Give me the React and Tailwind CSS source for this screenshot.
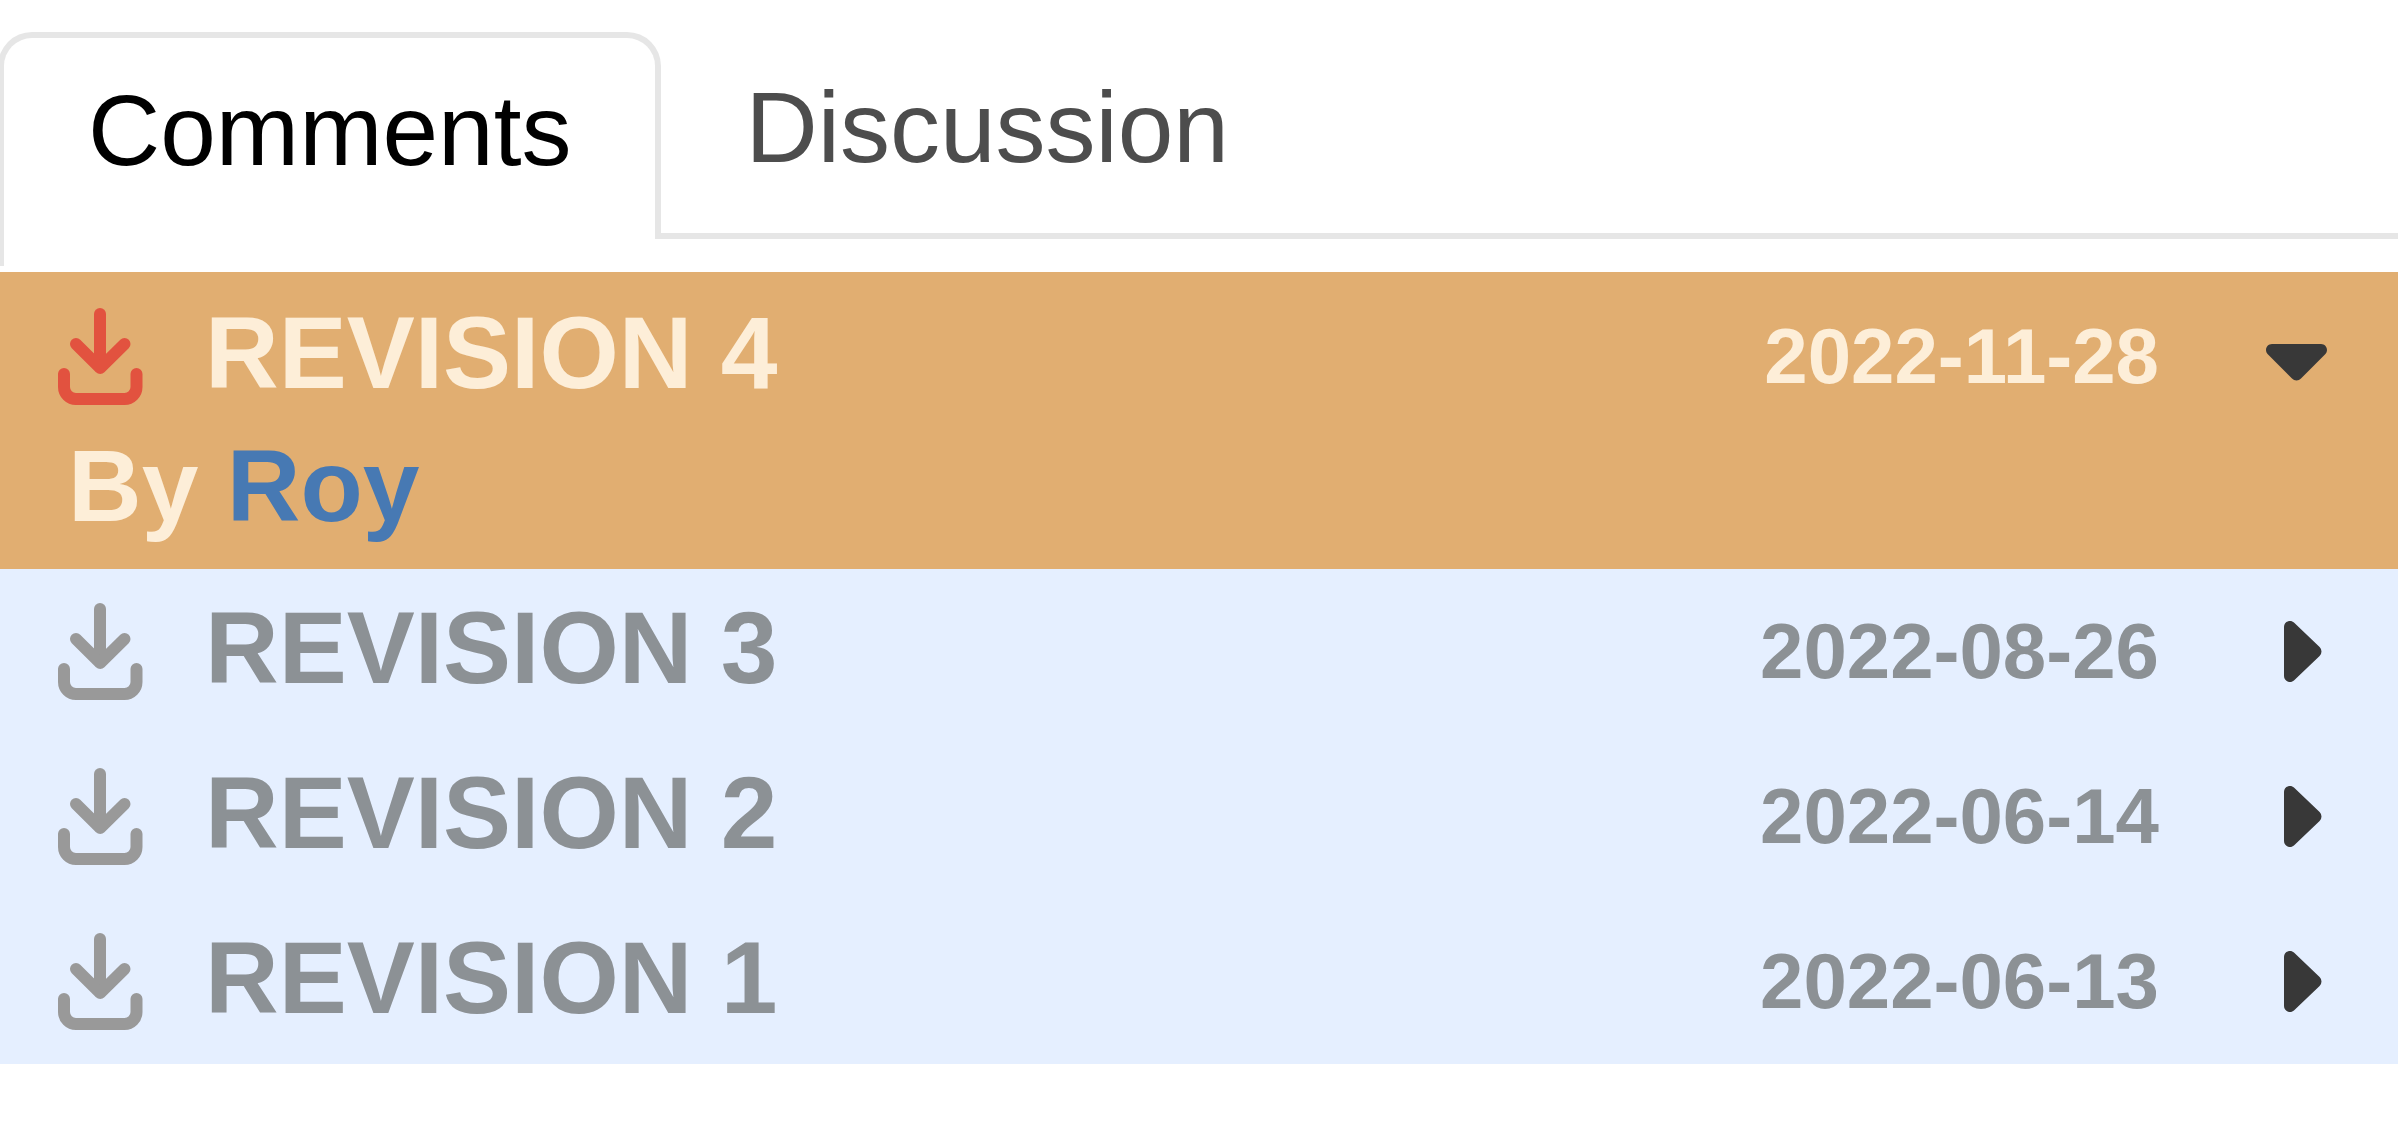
import { useState } from "react";

const revisions = [
  { id: 4, date: "2022-11-28" },
  { id: 3, date: "2022-08-26" },
  { id: 2, date: "2022-06-14" },
  { id: 1, date: "2022-06-13" },
];

const DownloadIcon = () => (
  <svg
    viewBox="0 0 96 96"
    className="block size-24 overflow-visible"
    fill="none"
    stroke="currentColor"
    strokeWidth="12"
    strokeLinecap="round"
    strokeLinejoin="round"
    aria-hidden="true"
  >
    <path d="M48 6v53" />
    <path d="M24 36l24.2 24L72.500 36" />
    <path d="M12 66v13a12 12 0 0 0 12 12h48.500a12 12 0 0 0 12-12V66" />
  </svg>
);

const Caret = ({ open }) => (
  <svg viewBox="0 0 96 96" className="block size-24" fill="currentColor" aria-hidden="true">
    {open ? (
      <path d="M24 36h49c5.300 0 8 6.400 4.200 10.200L53 70.600a6.300 6.300 0 0 1-9 0L19.800 46.200C16 42.400 18.700 36 24 36z" />
    ) : (
      <path d="M36 24v49c0 5.300 6.400 8 10.200 4.200L71.600 53a6.300 6.300 0 0 0 0-9L46.200 19.800C42.400 16 36 18.700 36 24z" />
    )}
  </svg>
);

const Revision = ({ id, date, open, onToggle }) => (
  <li className={open ? "bg-[#e1ae71] text-[#fdeed8] pb-9" : "bg-[#e5efff] text-[#8c9195]"}>
    <div className={`flex items-center pl-[52px] pr-[54px] ${open ? "h-[168px]" : "h-[165px] pb-0.5"}`}>
      <button
        type="button"
        aria-label={`Download revision ${id}`}
        className={open ? "text-[#e2523f]" : "text-[#999999]"}
      >
        <DownloadIcon />
      </button>
      <h2 className="ml-[57px] flex-1 pb-1.5 text-[102px] leading-none">REVISION {id}</h2>
      <time dateTime={date} className="text-[78px] leading-none">{date}</time>
      <button
        type="button"
        aria-label={`Toggle revision ${id}`}
        aria-expanded={open}
        onClick={onToggle}
        className="ml-[89px] text-[#383838]"
      >
        <Caret open={open} />
      </button>
    </div>
    {open && (
      <p className="px-[68px] text-[102px] leading-[93px]">
        By <a href="#roy" className="text-[#4779b3]">Roy</a>
      </p>
    )}
  </li>
);

const App = () => {
  const [openId, setOpenId] = useState(4);

  return (
    <main className="min-h-screen overflow-x-hidden bg-white font-['Liberation_Sans',Arial,sans-serif]">
      <div role="tablist" className="flex items-stretch pt-8 text-[100px] leading-none">
        <button
          type="button"
          role="tab"
          aria-selected="true"
          className="-ml-0.5 rounded-t-[34px] border-6 border-b-0 border-[#e6e6e6] px-[84px] pt-[42px] pb-[59px] text-black"
        >
          Comments
        </button>
        <div className="flex flex-1 border-b-6 border-[#e6e6e6]">
          <button
            type="button"
            role="tab"
            aria-selected="false"
            className="px-[84px] pt-[45px] pb-14 text-[#4d4d4d]"
          >
            Discussion
          </button>
        </div>
      </div>
      <div className="mb-1.5 h-[27px] border-l-4 border-[#e6e6e6]" />
      <ul className="font-bold">
        {revisions.map((rev) => (
          <Revision
            key={rev.id}
            {...rev}
            open={openId === rev.id}
            onToggle={() => setOpenId(openId === rev.id ? null : rev.id)}
          />
        ))}
      </ul>
    </main>
  );
};

export default App;
